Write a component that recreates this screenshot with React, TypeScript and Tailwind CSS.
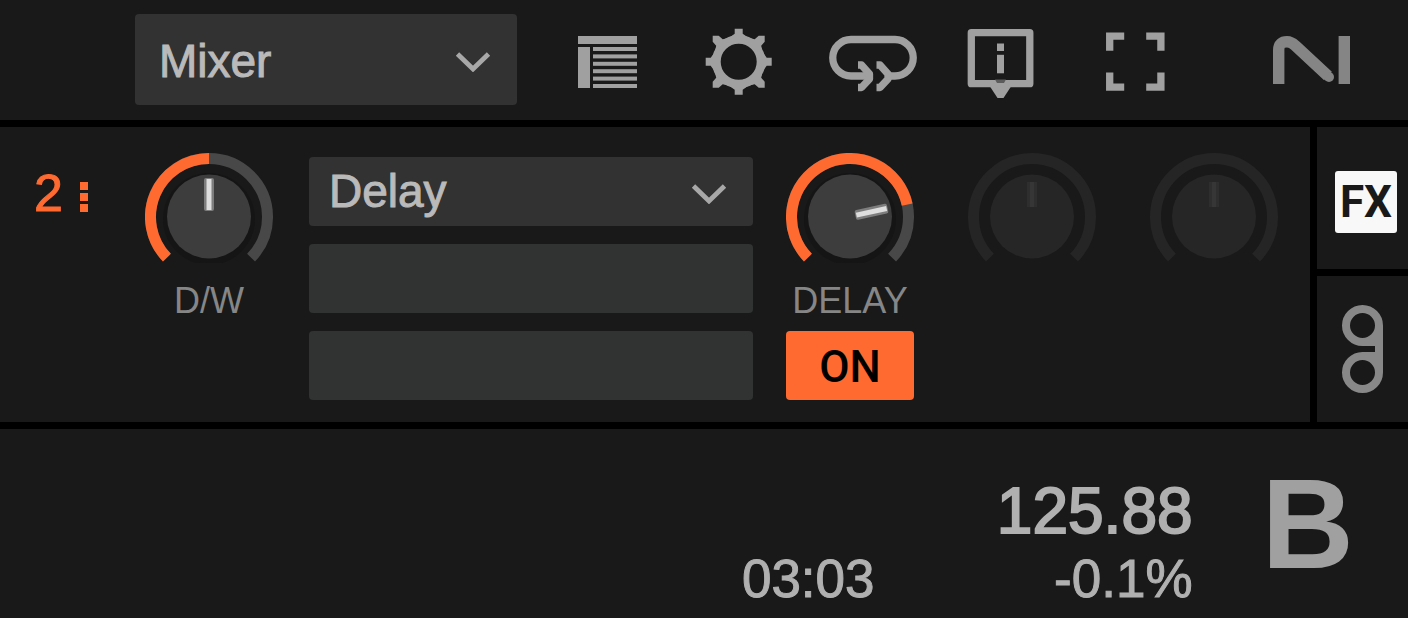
import { useId, useState } from "react";
import type { ReactNode } from "react";

function Chevron() {
  return (
    <div className="pointer-events-none absolute inset-y-0 right-[26px] flex items-center pt-1">
      <svg width="36" height="20" viewBox="0 0 36 20" fill="none" stroke="#a8a8a8" strokeWidth="4.8" aria-hidden="true">
        <path d="M2.5 2 L18 17 L33.5 2" />
      </svg>
    </div>
  );
}

function Picker({ label, options, tall = false }: { label: string; options: string[]; tall?: boolean }) {
  const empty = options.length === 0;
  return (
    <div className="relative">
      <select
        aria-label={label}
        className={`block w-full appearance-none rounded-[4px] pr-16 text-[46px] text-[#bababa] outline-none [-webkit-text-stroke:1px] ${
          tall ? "h-[91px] pt-1 pl-6" : "h-[69px] pl-5"
        } ${empty ? "bg-[#313232]" : "bg-[#323232]"}`}
      >
        {options.map((o) => (
          <option key={o}>{o}</option>
        ))}
      </select>
      {!empty && <Chevron />}
    </div>
  );
}

const SWEEP = 134;

function arc(from: number, to: number) {
  const r = 58.5;
  const pt = (deg: number) => {
    const a = ((deg - 90) * Math.PI) / 180;
    return `${(64 + r * Math.cos(a)).toFixed(2)} ${(64 + r * Math.sin(a)).toFixed(2)}`;
  };
  return `M${pt(from)} A${r} ${r} 0 ${to - from > 180 ? 1 : 0} 1 ${pt(to)}`;
}

function Knob({ name, caption, initial, disabled = false }: { name: string; caption?: string; initial: number; disabled?: boolean }) {
  const id = useId();
  const [value, setValue] = useState(initial);
  const angle = -SWEEP + (value / 100) * 2 * SWEEP;
  return (
    <div className="flex flex-col items-center">
      <div className="relative">
        <svg width="128" height="110" viewBox="0 0 128 110" fill="none" aria-hidden="true">
          {!disabled && <circle cx="64" cy="66" r="46" fill="#151515" />}
          <path d={arc(-SWEEP, SWEEP)} stroke={disabled ? "#252525" : "#484848"} strokeWidth="11" />
          {!disabled && <path d={arc(-SWEEP, angle)} stroke="#ff6a30" strokeWidth="11" />}
          <circle cx="64" cy="63.5" r="42" fill={disabled ? "#262626" : "#3d3d3d"} />
          {disabled ? (
            <>
              <rect x="59" y="29" width="10" height="25" fill="#2e2e2e" />
              <rect x="62" y="29" width="4" height="25" fill="#363636" />
            </>
          ) : (
            <g transform={`rotate(${angle} 64 63.5)`}>
              <rect x="59" y="25" width="10" height="33" rx="2" fill="#7d7d7d" />
              <rect x="61.5" y="26" width="5" height="31" fill="#dedede" />
            </g>
          )}
        </svg>
        <input
          id={id}
          type="range"
          aria-label={name}
          min={0}
          max={100}
          value={value}
          disabled={disabled}
          onChange={(e) => setValue(Number(e.target.value))}
          className="absolute inset-0 h-full w-full cursor-pointer opacity-0 disabled:cursor-default"
        />
      </div>
      {caption && (
        <label htmlFor={id} className="mt-5 text-[36px] leading-9 whitespace-nowrap text-[#868686]">
          {caption}
        </label>
      )}
    </div>
  );
}

function ToolButton({ label, children }: { label: string; children: ReactNode }) {
  return (
    <button type="button" aria-label={label} className="block h-[92px] w-[88px] shrink-0">
      <svg width="88" height="92" viewBox="0 0 88 92" fill="none" className="overflow-visible" aria-hidden="true">
        {children}
      </svg>
    </button>
  );
}

function Header() {
  return (
    <header className="flex items-start bg-[#191919] pt-[14px] pr-[58px] pb-[14px] pl-[135px]">
      <div className="w-[382px] shrink-0">
        <Picker label="Layout" options={["Mixer", "Essential", "Extended"]} tall />
      </div>
      <nav className="ml-[46px] flex gap-11" aria-label="View controls">
        <ToolButton label="Browser">
          <g fill="#a0a0a0">
            <rect x="15" y="22" width="59" height="8" />
            <rect x="15" y="33" width="12" height="41" />
            {[33, 40.4, 47.8, 55.2, 62.6, 70].map((y) => (
              <rect key={y} x="30" y={y} width="44" height="4" />
            ))}
          </g>
        </ToolButton>
        <ToolButton label="Preferences">
          <g transform="translate(43.7 47.7)">
            <circle r="22.3" stroke="#a0a0a0" strokeWidth="8.6" />
            {[0, 90, 180, 270].map((a) => (
              <path key={a} d="M-11 -23 L-4 -28 V-33 H4 V-28 L11 -23 Z" fill="#a0a0a0" transform={`rotate(${a})`} />
            ))}
            {[0, 90, 180, 270].map((a) => (
              <path key={a} d="M7 -24.5 L16 -22.5 L20 -26 H26 V-20 L22.5 -16 L24.5 -7 L14 -14 Z" fill="#a0a0a0" transform={`rotate(${a})`} />
            ))}
          </g>
        </ToolButton>
        <ToolButton label="Cruise">
          <g stroke="#a0a0a0" strokeWidth="7.3">
            <path d="M42 62 H24 A18 18 0 0 1 24 25.5 H68 A18 18 0 0 1 68 62 H61" />
            <path d="M31 51 H34.5 L42.5 60 V65 L34.5 73.5 H31" strokeLinejoin="round" />
            <path d="M49.5 51 H53 L61 60 V65 L53 73.5 H49.5" strokeLinejoin="round" />
          </g>
        </ToolButton>
        <ToolButton label="Info">
          <rect x="12.3" y="18.7" width="58.5" height="51" stroke="#a0a0a0" strokeWidth="7.3" strokeLinejoin="round" />
          <g fill="#a0a0a0">
            <rect x="38" y="29.5" width="7" height="7.5" />
            <rect x="38" y="40.8" width="7" height="18.5" />
            <path d="M30 71 L38.5 84 H44.5 L53 71 Z" />
          </g>
          <path d="M36 65.5 H47 L45 69 H38 Z" fill="#5c5c5c" />
        </ToolButton>
        <ToolButton label="Full screen">
          <path
            d="M18.7 36.7 V22.2 H33.2 M55.2 22.2 H69.9 V36.7 M69.9 58.5 V73.2 H55.2 M33.2 73.2 H18.7 V58.5"
            stroke="#a0a0a0"
            strokeWidth="7.3"
          />
        </ToolButton>
      </nav>
      <svg
        className="mt-[22px] ml-auto shrink-0"
        width="77"
        height="48"
        viewBox="0 0 77 48"
        fill="none"
        stroke="#858585"
        strokeWidth="11.4"
        role="img"
        aria-label="Native Instruments"
      >
        <path d="M5.7 48 V14 C5.7 8 9 5.7 14 5.7 C18.5 5.7 20.5 8 23 10.3 L55 40" />
        <circle cx="56" cy="41" r="5" fill="#858585" stroke="none" />
        <path d="M71.3 0 V48" />
      </svg>
    </header>
  );
}

function EffectsUnit() {
  const [on, setOn] = useState(true);
  return (
    <section
      aria-label="Effects unit 2"
      className="flex min-w-0 flex-1 items-start bg-[#191919] pt-[26px] pr-8 pb-[22px] pl-[34px]"
    >
      <div className="flex w-[111px] shrink-0 items-start pt-3">
        <span className="text-[52px] leading-[56px] text-[#ff6a30] [-webkit-text-stroke:1px]">2</span>
        <button type="button" aria-label="Unit menu" className="mt-[17px] ml-[17px] flex flex-col gap-[3px]">
          <span className="h-2 w-2 bg-[#ff6a30]" />
          <span className="h-2 w-2 bg-[#ff6a30]" />
          <span className="h-2 w-2 bg-[#ff6a30]" />
        </button>
      </div>
      <Knob name="Dry/Wet" caption="D/W" initial={50} />
      <div className="mt-1 mr-[33px] ml-9 flex min-w-0 flex-1 flex-col gap-[18px]">
        <Picker label="Effect 1" options={["Delay", "Reverb", "Flanger"]} />
        <Picker label="Effect 2" options={[]} />
        <Picker label="Effect 3" options={[]} />
      </div>
      <div className="flex gap-[54px]">
        <div className="flex w-32 flex-col">
          <Knob name="Delay amount" caption="DELAY" initial={79} />
          <button
            type="button"
            aria-pressed={on}
            onClick={() => setOn(!on)}
            className={`mt-3 h-[69px] rounded-[4px] pt-0.5 font-[Roboto,sans-serif] text-[44px] font-medium text-black ${
              on ? "bg-[#ff6a30]" : "bg-[#484848]"
            }`}
          >
            ON
          </button>
        </div>
        <Knob name="Parameter 2" initial={50} disabled />
        <Knob name="Parameter 3" initial={50} disabled />
      </div>
    </section>
  );
}

function PanelTabs() {
  return (
    <div className="flex w-[91px] shrink-0 flex-col gap-[7px]">
      <button type="button" aria-label="Effects panel" className="flex h-[142px] justify-start bg-[#191919] pt-11 pl-[18px]">
        <span className="flex h-[62px] w-[62px] items-center justify-center rounded-[3px] bg-[#f8f8f8] font-[Roboto,sans-serif] text-[44px] leading-none font-bold text-[#191919]">
          FX
        </span>
      </button>
      <button type="button" aria-label="Recorder panel" className="flex flex-1 items-center justify-center bg-[#191919]">
        <svg width="42" height="88" viewBox="0 0 42 88" fill="none" stroke="#888888" strokeWidth="8" aria-hidden="true">
          <circle cx="20.5" cy="20.5" r="16.5" />
          <circle cx="20.5" cy="67.5" r="16.5" />
          <path d="M20.5 37 H37 V20.5 M37 36 V67.5 M20.5 51 H37" />
        </svg>
      </button>
    </div>
  );
}

function DeckInfo() {
  return (
    <section
      aria-label="Deck B"
      className="flex flex-1 items-start justify-end bg-[#191919] pr-[54px] text-[#b0b0b0] [-webkit-text-stroke:1px]"
    >
      <div className="flex items-end pt-[50px]">
        <span className="text-[53px] leading-[64px]">03:03</span>
        <div className="ml-[118px] flex w-[200px] flex-col items-end gap-1">
          <span className="text-[64px] leading-[64px] [-webkit-text-stroke:2px]">125.88</span>
          <span className="text-[53px] leading-[64px]">-0.1%</span>
        </div>
      </div>
      <span className="mt-[31px] ml-[69px] text-[128px] leading-[128px] font-bold text-[#a0a0a0] [-webkit-text-stroke:0px]">B</span>
    </section>
  );
}

export default function App() {
  return (
    <main className="flex min-h-screen flex-col gap-[7px] bg-black font-['Liberation_Sans',Arial,sans-serif]">
      <Header />
      <div className="flex gap-[7px]">
        <EffectsUnit />
        <PanelTabs />
      </div>
      <DeckInfo />
    </main>
  );
}
